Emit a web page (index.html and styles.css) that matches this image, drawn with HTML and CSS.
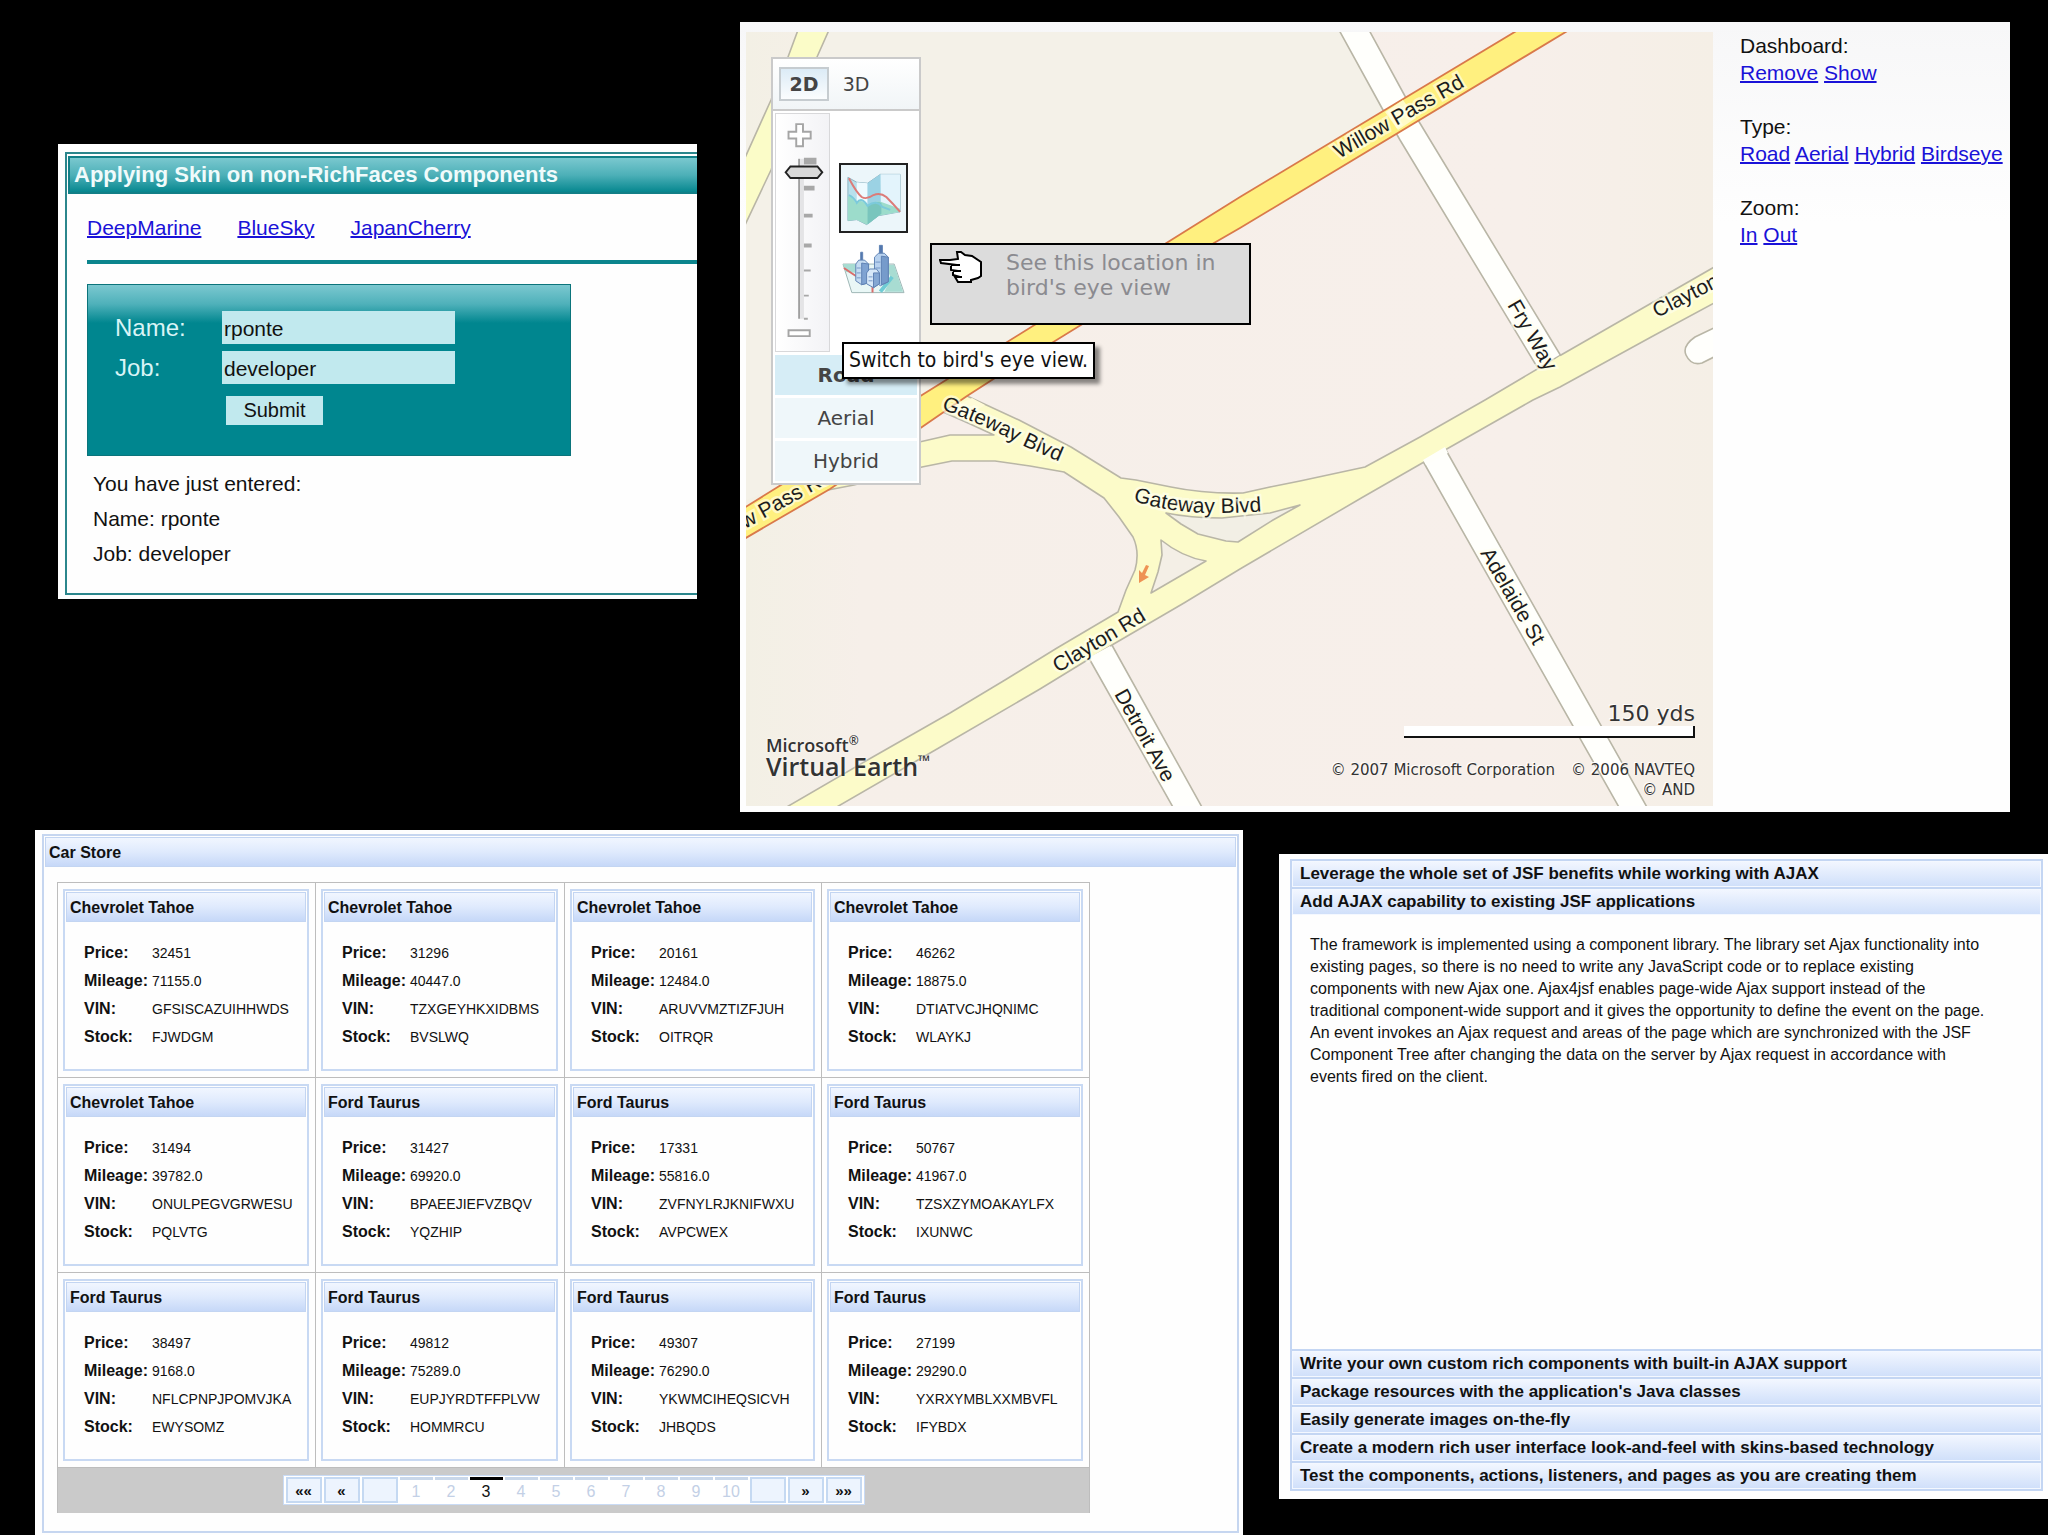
FILE: index.html
```html
<!DOCTYPE html>
<html lang="en">
<head>
<meta charset="utf-8">
<title>RichFaces component showcase</title>
<link rel="stylesheet" href="styles.css">
</head>
<body>
<main class="page">
<div class="row row-top">
  <section class="sheet skin">
    <div class="skin-frame">
      <h2 class="skin-title">Applying Skin on non-RichFaces Components</h2>
      <div class="skin-body">
        <nav class="skin-links"><a href="#deep">DeepMarine</a><a href="#blue">BlueSky</a><a href="#cherry">JapanCherry</a></nav>
        <hr class="rule">
        <form class="skin-form">
          <label for="name">Name:</label><input id="name" type="text" value="rponte">
          <label for="job">Job:</label><input id="job" type="text" value="developer">
          <button type="button">Submit</button>
        </form>
        <div class="result"><p>You have just entered:</p><p>Name: rponte</p><p>Job: developer</p></div>
      </div>
    </div>
  </section>

  <section class="sheet map-panel">
    <div class="map">
      <svg class="map-art" viewBox="746 32 967 774" role="img" aria-label="Street map">
        <defs>
          <linearGradient id="land" x1="0" x2="1" y1="0" y2="0">
            <stop offset="0" stop-color="#f3f0e5"/><stop offset=".12" stop-color="#f6efe9"/>
            <stop offset=".8" stop-color="#f7efea"/><stop offset="1" stop-color="#f5efe6"/>
          </linearGradient>
          <path id="gateway-curve" d="M1133 501Q1172 513 1212 513T1272 510"/>
          <path id="gateway-ramp" d="M941 409Q983 425 1006 437T1070 466"/>
        </defs>
        <rect x="746" y="32" width="967" height="774" fill="url(#land)"/>
        <path d="M828 32H1340L1383 110L922 395L771 490L746 500V223L771 170Z" fill="#f4f1e8"/>
        <g stroke="#b9b6a6" stroke-width="1.6" stroke-linejoin="round">
          <path d="M798 30L788 57L771 100L744 160V227L771 170L817 57L829 30Z" fill="#fbfcc8"/>
          <path d="M1339 30L1383 110L1400 140L1545 380L1567 366L1418 120L1369 30Z" fill="#fffffc"/>
          <path d="M1420 456L1620 809H1648L1442 443Z" fill="#fffffc"/>
          <path d="M1086 653L1174 809H1203L1108 638Z" fill="#fffffc"/>
          <path d="M1716 327L1695 337Q1682 346 1686 355Q1691 366 1702 363L1716 356Z" fill="#fffffc"/>
          <path d="M967 396L1019 420L1071 447L1121 478L1136 480L1171 487Q1205 494 1243 493L1270 487L1300 481L1365 467L1420 437L1485 400L1561 355L1716 266V302L1653 336L1560 387L1533 400L1445 450L1363 497L1240 569L1184 603L1112 645L1040 689L937 749L835 808H785L871 758L950 713L1005 680L1057 648L1118 612L1126 590L1135 570Q1140 552 1133 537L1119 517L1104 498L1064 472L1030 466L995 461H952L922 467L854 485L828 490V470L940 400Z" fill="#fcfbc9"/>
          <path d="M943 412L968 423L994 435H950L915 443V430Z" fill="#f7efea"/>
          <path d="M1166 513Q1190 518 1222 518L1270 513L1300 505L1273 520L1238 542L1226 541L1198 534L1181 524Z" fill="#f2efe5"/>
          <path d="M1161 540Q1182 557 1206 561L1151 593L1158 572L1162 555Z" fill="#f4efe6"/>
        </g>
        <path d="M1518 30L1240 197L1168 242L922 395L781 485L744 508V539L830 489L922 427L967 396L995 378L1214 243L1240 228L1569 30Z" fill="#fff07f" stroke="#d9794a" stroke-width="1.8"/>
        <path d="M1385 112L1403 100L1416 118L1398 130Z" fill="#fffbc8"/>
        <path d="M1540 369L1560 356L1568 362L1548 374Z" fill="#fcfbc9"/>
        <path d="M1423 460L1445 447L1448 453L1426 465ZM1090 657L1110 646L1113 650L1093 662Z" fill="#fffffa"/>
        <path d="M945 410L972 398L985 405L963 419Z" fill="#fffbd8"/>
        <path d="M1149 566L1145 575L1149 577L1139 583L1139 570L1142 573L1146 565Z" fill="#ee9254"/>
        <g class="road-names">
          <text transform="translate(1339 159) rotate(-30)">Willow Pass Rd</text>
          <text transform="translate(745 529) rotate(-29)">w Pass Rd</text>
          <text transform="translate(1507 305) rotate(60)">Fry Way</text>
          <text transform="translate(1480 553) rotate(60)">Adelaide St</text>
          <text transform="translate(1114 694) rotate(61)">Detroit Ave</text>
          <text transform="translate(1058 673) rotate(-31)">Clayton Rd</text>
          <text transform="translate(1657 318) rotate(-27)">Clayton Rd</text>
          <text><textPath href="#gateway-ramp">Gateway Blvd</textPath></text>
          <text><textPath href="#gateway-curve">Gateway Blvd</textPath></text>
        </g>
      </svg>

      <div class="brand"><span>Microsoft<sup>®</sup></span><strong>Virtual Earth<sup>™</sup></strong></div>
      <div class="scale"><span>150 yds</span><div class="scale-bar"></div></div>
      <div class="copyright"><p><span>© 2007 Microsoft Corporation</span><span>© 2006 NAVTEQ</span></p><p>© AND</p></div>

      <div class="dash">
        <div class="dash-head"><button type="button" class="on">2D</button><button type="button">3D</button></div>
        <div class="dash-mid">
          <svg class="slider" viewBox="0 0 55 239" aria-hidden="true">
            <g fill="#fff" stroke="#a5a5a5" stroke-width="2">
              <path d="M21 7h7v8h8v7h-8v8h-7v-8h-8v-7h8z"/><path d="M13 221h22v6H13z"/>
            </g>
            <path d="M23 43h2v166h-2z" fill="#9f9f9f"/><path d="M25 43h4v166h-4z" fill="#e4e4e6"/>
            <path d="M29 42h13v7H29zM29 71h11v5H29zM29 100h9v4h-9zM29 131h8v4h-8zM29 158h7v2h-7zM29 184h5v2h-5zM29 208h4v2h-4z" fill="#a8a8a8"/>
            <path d="M10 57L15 51H43L48 57L43 63H15Z" fill="#d9d9d9" stroke="#222" stroke-width="2"/>
          </svg>
          <div class="views">
            <button type="button" class="view on" aria-label="Map view">
              <svg viewBox="0 0 66 66">
                <path d="M7 12L16 17L27 18L40 9H60V47L38 51L26 60L16 55L7 56Z" fill="#b8e0ec" stroke="#8fb4c2"/>
                <path d="M16 17L27 18V59L16 55Z" fill="#eefaff"/><path d="M40 9H60V47L41 50Z" fill="#e3f4fc"/>
                <path d="M27 18L40 9V49L27 60Z" fill="#9bd2e4"/>
                <path d="M7 31Q12 32 15 38Q21 33 27 41Q36 35 41 37L60 44V47L38 51L26 60L16 55L7 56Z" fill="#9cdccb"/>
                <path d="M27 41Q35 35 41 38V49L27 60Z" fill="#79c5bd"/>
                <path d="M8 30Q13 32 16 38Q21 31 27 41Q36 34 42 42L50 45" fill="none" stroke="#7ccadb" stroke-width="2"/>
                <path d="M8 13Q16 28 21 32Q26 35 33 30Q40 27 46 32Q53 39 60 47" fill="none" stroke="#dc7b78" stroke-width="2"/>
              </svg>
            </button>
            <button type="button" class="view" aria-label="Bird's eye view">
              <svg viewBox="0 0 66 66">
                <path d="M2 29H54L64 58H11Z" fill="#e9f7f6" stroke="#9db6b5"/>
                <path d="M2 29H18L17 38L5 37ZM45 30H54L63 57H44L51 44Z" fill="#a8dcd2"/>
                <path d="M3 33Q13 40 20 44L32 50V58" fill="none" stroke="#d96d6b" stroke-width="2"/>
                <path d="M52 42L40 57" stroke="#6fcbd4" stroke-width="4"/>
                <g stroke="#5f82b4" stroke-width="1">
                  <path d="M20 17h2v9h-2zM39 10h3v12h-3z" fill="#5377ae"/>
                  <path d="M15 29l3-4h6l4 4v19l-7 2-6-4z" fill="#c5dcf2"/><path d="M21 28l7 1v19l-7 2z" fill="#7fa3d2"/>
                  <path d="M34 22l4-4h6l4 4v25l-8 4-6-4z" fill="#b7d1ee"/><path d="M41 21l7 1v25l-7 3z" fill="#769bcb"/>
                  <path d="M26 38l3-4h7l3 4v11l-6 4-7-4z" fill="#d7e8f8"/><path d="M33 38h6v11l-6 4z" fill="#84a7d3"/>
                  <path d="M16 33h4M16 38h4M16 43h4M35 27h5M35 33h5M28 42h4M28 46h4" stroke="#7497c7"/>
                </g>
              </svg>
            </button>
          </div>
        </div>
        <div class="styles"><button type="button" class="on">Road</button><button type="button">Aerial</button><button type="button">Hybrid</button></div>
      </div>

      <div class="hint">
        <svg viewBox="0 0 44 34" aria-hidden="true"><path d="M1 10H11L19 9L18 2H22L26 5L33 6L42 12V26L39 28L32 30V32H19L16 27H21L14 25V21H19L12 20V15H18L2 13Z" fill="#fff" stroke="#000" stroke-width="2"/><path d="M12 15H21M14 21H22M16 27H23" stroke="#000" stroke-width="2"/></svg>
        <p>See this location in bird's eye view</p>
      </div>
      <div class="tip" role="tooltip">Switch to bird's eye view.</div>
    </div>

    <aside class="side">
      <p>Dashboard:<br><a href="#remove">Remove</a> <a href="#show">Show</a></p>
      <p>Type:<br><a href="#road">Road</a> <a href="#aerial">Aerial</a> <a href="#hybrid">Hybrid</a> <a href="#birdseye">Birdseye</a></p>
      <p>Zoom:<br><a href="#in">In</a> <a href="#out">Out</a></p>
    </aside>
  </section>
</div>

<div class="row row-bottom">
  <section class="sheet store">
    <div class="store-frame">
      <h2 class="bar">Car Store</h2>
      <div class="store-body">
        <div class="cars">
          <div class="cell"><article class="card"><h3 class="bar">Chevrolet Tahoe</h3><table><tr><th>Price:</th><td>32451</td></tr><tr><th>Mileage:</th><td>71155.0</td></tr><tr><th>VIN:</th><td>GFSISCAZUIHHWDS</td></tr><tr><th>Stock:</th><td>FJWDGM</td></tr></table></article></div>
          <div class="cell"><article class="card"><h3 class="bar">Chevrolet Tahoe</h3><table><tr><th>Price:</th><td>31296</td></tr><tr><th>Mileage:</th><td>40447.0</td></tr><tr><th>VIN:</th><td>TZXGEYHKXIDBMS</td></tr><tr><th>Stock:</th><td>BVSLWQ</td></tr></table></article></div>
          <div class="cell"><article class="card"><h3 class="bar">Chevrolet Tahoe</h3><table><tr><th>Price:</th><td>20161</td></tr><tr><th>Mileage:</th><td>12484.0</td></tr><tr><th>VIN:</th><td>ARUVVMZTIZFJUH</td></tr><tr><th>Stock:</th><td>OITRQR</td></tr></table></article></div>
          <div class="cell"><article class="card"><h3 class="bar">Chevrolet Tahoe</h3><table><tr><th>Price:</th><td>46262</td></tr><tr><th>Mileage:</th><td>18875.0</td></tr><tr><th>VIN:</th><td>DTIATVCJHQNIMC</td></tr><tr><th>Stock:</th><td>WLAYKJ</td></tr></table></article></div>
          <div class="cell"><article class="card"><h3 class="bar">Chevrolet Tahoe</h3><table><tr><th>Price:</th><td>31494</td></tr><tr><th>Mileage:</th><td>39782.0</td></tr><tr><th>VIN:</th><td>ONULPEGVGRWESU</td></tr><tr><th>Stock:</th><td>PQLVTG</td></tr></table></article></div>
          <div class="cell"><article class="card"><h3 class="bar">Ford Taurus</h3><table><tr><th>Price:</th><td>31427</td></tr><tr><th>Mileage:</th><td>69920.0</td></tr><tr><th>VIN:</th><td>BPAEEJIEFVZBQV</td></tr><tr><th>Stock:</th><td>YQZHIP</td></tr></table></article></div>
          <div class="cell"><article class="card"><h3 class="bar">Ford Taurus</h3><table><tr><th>Price:</th><td>17331</td></tr><tr><th>Mileage:</th><td>55816.0</td></tr><tr><th>VIN:</th><td>ZVFNYLRJKNIFWXU</td></tr><tr><th>Stock:</th><td>AVPCWEX</td></tr></table></article></div>
          <div class="cell"><article class="card"><h3 class="bar">Ford Taurus</h3><table><tr><th>Price:</th><td>50767</td></tr><tr><th>Mileage:</th><td>41967.0</td></tr><tr><th>VIN:</th><td>TZSXZYMOAKAYLFX</td></tr><tr><th>Stock:</th><td>IXUNWC</td></tr></table></article></div>
          <div class="cell"><article class="card"><h3 class="bar">Ford Taurus</h3><table><tr><th>Price:</th><td>38497</td></tr><tr><th>Mileage:</th><td>9168.0</td></tr><tr><th>VIN:</th><td>NFLCPNPJPOMVJKA</td></tr><tr><th>Stock:</th><td>EWYSOMZ</td></tr></table></article></div>
          <div class="cell"><article class="card"><h3 class="bar">Ford Taurus</h3><table><tr><th>Price:</th><td>49812</td></tr><tr><th>Mileage:</th><td>75289.0</td></tr><tr><th>VIN:</th><td>EUPJYRDTFFPLVW</td></tr><tr><th>Stock:</th><td>HOMMRCU</td></tr></table></article></div>
          <div class="cell"><article class="card"><h3 class="bar">Ford Taurus</h3><table><tr><th>Price:</th><td>49307</td></tr><tr><th>Mileage:</th><td>76290.0</td></tr><tr><th>VIN:</th><td>YKWMCIHEQSICVH</td></tr><tr><th>Stock:</th><td>JHBQDS</td></tr></table></article></div>
          <div class="cell"><article class="card"><h3 class="bar">Ford Taurus</h3><table><tr><th>Price:</th><td>27199</td></tr><tr><th>Mileage:</th><td>29290.0</td></tr><tr><th>VIN:</th><td>YXRXYMBLXXMBVFL</td></tr><tr><th>Stock:</th><td>IFYBDX</td></tr></table></article></div>
          <div class="pager-row">
            <nav class="pager" aria-label="Pages">
              <button type="button" class="step">««</button><button type="button" class="step">«</button><span class="step"></span>
              <button type="button" class="num">1</button><button type="button" class="num">2</button><button type="button" class="num current">3</button><button type="button" class="num">4</button><button type="button" class="num">5</button><button type="button" class="num">6</button><button type="button" class="num">7</button><button type="button" class="num">8</button><button type="button" class="num">9</button><button type="button" class="num">10</button>
              <span class="step"></span><button type="button" class="step">»</button><button type="button" class="step">»»</button>
            </nav>
          </div>
        </div>
      </div>
    </div>
  </section>

  <section class="sheet accordion">
    <div class="accordion-frame">
      <button type="button" class="fold">Leverage the whole set of JSF benefits while working with AJAX</button>
      <button type="button" class="fold open">Add AJAX capability to existing JSF applications</button>
      <p class="fold-body">The framework is implemented using a component library. The library set Ajax functionality into existing pages, so there is no need to write any JavaScript code or to replace existing components with new Ajax one. Ajax4jsf enables page-wide Ajax support instead of the traditional component-wide support and it gives the opportunity to define the event on the page. An event invokes an Ajax request and areas of the page which are synchronized with the JSF Component Tree after changing the data on the server by Ajax request in accordance with events fired on the client.</p>
      <button type="button" class="fold">Write your own custom rich components with built-in AJAX support</button>
      <button type="button" class="fold">Package resources with the application's Java classes</button>
      <button type="button" class="fold">Easily generate images on-the-fly</button>
      <button type="button" class="fold">Create a modern rich user interface look-and-feel with skins-based technology</button>
      <button type="button" class="fold">Test the components, actions, listeners, and pages as you are creating them</button>
    </div>
  </section>
</div>
</main>
</body>
</html>
```
FILE: styles.css
```css
* { box-sizing: border-box; }
body { margin: 0; background: #000; color: #111; font-family: "Liberation Sans", Arial, sans-serif; font-size: 21px; line-height: 27px; }
h2, h3, p { margin: 0; }
button, input { font-family: inherit; color: inherit; border: 0; margin: 0; padding: 0; border-radius: 0; background: none; }
a { color: #1a12d8; text-decoration-thickness: 2px; }
.row { display: grid; align-items: start; }
.row-top { grid-template-columns: 639fr 1270fr; padding: 22px 38px 0 58px; gap: 43px; }
.row-bottom { grid-template-columns: 1208fr 769fr; margin-top: 18px; padding-left: 35px; gap: 36px; }
.sheet { background: #fefefe; min-width: 0; }

/* Skin sample */
.skin { margin-top: 122px; padding: 8px 0 4px 7px; }
.skin-frame { border: 2px solid #2b868c; border-right: 0; padding: 2px 0 0 1px; }
.skin-title { height: 38px; padding-left: 4px; border: 2px solid #127f87; border-right: 0; background: linear-gradient(#7ac8cf, #4db0b8 50%, #06878f); color: #f0fbfb; font-size: 22px; line-height: 34px; font-weight: bold; white-space: nowrap; }
.skin-body { padding: 20px 0 22px 19px; }
.skin-links { display: flex; gap: 36px; }
.rule { margin: 19px 0 20px; border: 0; height: 4px; background: #0c858d; }
.skin-form { display: grid; grid-template-columns: 107px 233px; gap: 7px 0; align-items: center; max-width: 484px; padding: 26px 27px 30px; border: 1px solid #0b747b; background: #00868f linear-gradient(#7bc8d0, #4fb1ba 50%, #00868f) 0 0 / 100% 38px no-repeat; }
.skin-form label { color: #d9f4f6; font-size: 24px; }
.skin-form input { width: 100%; height: 33px; padding: 2px 2px 0; background: #c1e9ee; font-size: 21px; }
.skin-form button { grid-column: 2; justify-self: start; width: 97px; height: 29px; margin: 5px 0 0 4px; background: #c1e9ee; font-size: 20px; }
.result { margin: 10px 0 0 6px; line-height: 35px; }

/* Map */
.map-panel { display: grid; grid-template-columns: 967fr 291fr; padding: 10px 6px 6px; background: linear-gradient(#f7f7f8, #fefefe 200px); }
.map { position: relative; overflow: hidden; }
.map-art { display: block; width: 100%; height: auto; }
.road-names { font-size: 21px; fill: #1c1c1c; stroke: #fffff0; stroke-opacity: .6; stroke-width: 5px; paint-order: stroke; }
.side { padding-left: 27px; }
.side p { margin-bottom: 27px; white-space: nowrap; }
.brand { position: absolute; left: 20px; bottom: 27px; display: flex; flex-direction: column; font-family: "Open Sans", sans-serif; color: #333; text-shadow: 0 0 3px #fff; }
.brand span { font-size: 18px; line-height: 18px; font-weight: 600; }
.brand strong { font-size: 25px; line-height: 25px; font-weight: 600; }
.brand sup { font-size: 12px; line-height: 0; }
.brand strong sup { font-size: 16px; }
.scale { position: absolute; right: 18px; bottom: 68px; width: 291px; font: 22px/25px "DejaVu Sans", sans-serif; text-align: right; color: #333; text-shadow: -1px -1px #fff; }
.scale-bar { height: 12px; background: #fff; border: solid #111; border-width: 0 2px 2px 0; }
.copyright { position: absolute; right: 18px; bottom: 6px; font: 15px/20px "DejaVu Sans", sans-serif; color: #333; text-align: right; text-shadow: -1px -1px #fff; white-space: nowrap; }
.copyright p { display: flex; justify-content: flex-end; gap: 16px; }

.dash { position: absolute; left: 25px; top: 25px; width: 150px; border: 2px solid #cacaca; background: #fff; color: #444; font-family: "DejaVu Sans", sans-serif; }
.dash-head { display: flex; height: 52px; padding: 8px 6px; gap: 2px; border-bottom: 2px solid #cacaca; background: linear-gradient(#fff, #f1f5f7); }
.dash-head button { width: 50px; height: 34px; font-size: 19px; }
.dash-head .on { border: 2px solid #c6ccd0; background: linear-gradient(#dcebf6, #fbfdfe); font-weight: bold; }
.dash-mid { display: flex; padding: 2px 2px 3px; }
.slider { width: 55px; height: 239px; border: 1px solid #d8d8da; background: linear-gradient(90deg, #fff, #f3f3f6); }
.views { padding: 50px 0 0 9px; }
.view { display: block; width: 69px; height: 70px; border: 2px solid transparent; }
.view.on { border-color: #222; background: #ecf6fa; }
.view svg { display: block; width: 100%; height: 100%; }
.styles { display: grid; gap: 3px; padding: 0 2px 2px; }
.styles button { height: 40px; background: #eff7fa; font-size: 20px; }
.styles .on { background: #d6edf6; font-weight: bold; }
.hint { position: absolute; left: 184px; top: 211px; width: 321px; height: 82px; display: flex; gap: 23px; padding: 5px 20px 0 7px; border: 2px solid #000; background: #dcdcdc; color: #8b8b90; font: 22px/25px "DejaVu Sans", sans-serif; }
.hint svg { flex: none; width: 44px; height: 34px; }
.tip { position: absolute; left: 96px; top: 310px; padding: 0 5px; border: 2px solid #000; background: #fff; box-shadow: 5px 5px 4px rgba(0, 0, 0, .45); color: #111; font: 21px/33px "DejaVu Sans Condensed", "Noto Sans", sans-serif; white-space: nowrap; }

/* Car store */
.bar { height: 30px; padding-left: 3px; border: 1px solid #c3d5f2; background: linear-gradient(#f1f6ff, #dfeafd 50%, #c6d8f8); font-size: 16px; line-height: 29px; font-weight: bold; }
.store { padding: 4px 4px 4px 7px; }
.store-frame { border: 2px solid #c6d6f0; padding: 1px; }
.store-body { padding: 15px 0 17px 12px; }
.cars { width: calc(100% - 146px); display: grid; grid-template-columns: 258fr 249fr 257fr 268fr; border: solid #bdbdbd; border-width: 1px 0 0 1px; }
.cell { padding: 6px 6px 6px 5px; border: solid #bdbdbd; border-width: 0 1px 1px 0; }
.card { height: 182px; padding: 1px; border: 2px solid #c8d9f3; }
.card table { margin: 17px 0 0 18px; border-spacing: 0; font-size: 14px; line-height: 28px; white-space: nowrap; }
.card tr { height: 28px; }
.card th { width: 68px; padding: 0; text-align: left; font-size: 16px; vertical-align: middle; }
.card td { padding: 0; vertical-align: middle; }
.pager-row { grid-column: 1 / -1; height: 45px; padding-top: 7px; display: flex; justify-content: center; background: #cacaca; border-right: 1px solid #bdbdbd; }
.pager { display: flex; gap: 2px; height: 30px; padding: 1px 2px; border: 1px solid #c9dbf5; background: #fff; }
.pager .step { width: 36px; border: 2px solid #c5d9f2; background: #edf4fe; font-size: 15px; font-weight: bold; }
.pager .num { width: 33px; border-top: 3px solid #c9d7e9; color: #c3d0e6; font-size: 16px; }
.pager .current { border-color: #000; color: #111; }

/* Accordion */
.accordion { padding: 5px 5px 8px 11px; margin-top: 24px; }
.accordion-frame { display: flex; flex-direction: column; border: 2px solid #c4d6f3; border-top: 0; }
.fold { height: 28px; padding: 0 8px; border-top: 2px solid #c4d6f3; background: linear-gradient(#f3f7ff, #cfdffa); box-shadow: inset 0 0 0 1px #f4f8ff; font-size: 17px; font-weight: bold; text-align: left; white-space: nowrap; }
.fold-body { min-height: 434px; padding: 19px 48px 0 18px; font-size: 16px; line-height: 22px; }
```
